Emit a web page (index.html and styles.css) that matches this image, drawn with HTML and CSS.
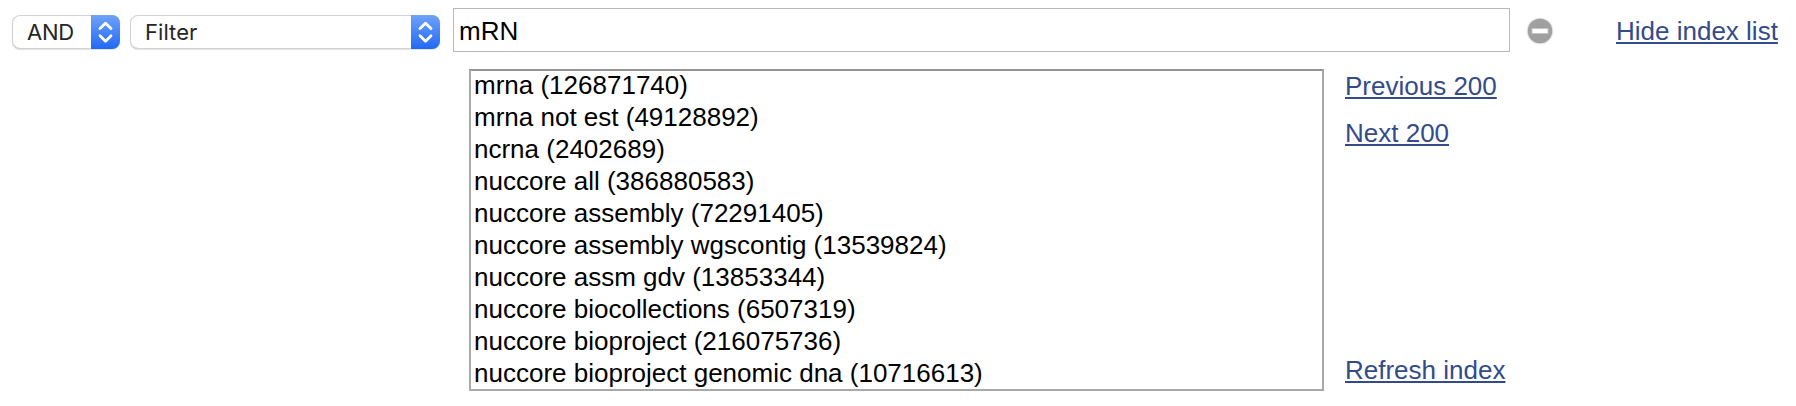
FILE: index.html
```html
<!DOCTYPE html>
<html lang="en">
<head>
<meta charset="utf-8">
<title>Search builder</title>
<link rel="stylesheet" href="styles.css">
</head>
<body>
<div class="row">
  <div class="select select-op"><span class="select-text op-text">AND</span><span class="stepper"><svg width="29" height="34" viewBox="0 0 29 34"><path d="M9 13.6l5.5-5.4 5.5 5.4M9 20.8l5.5 5.4 5.5-5.4"/></svg></span></div>
  <div class="select select-field"><span class="select-text">Filter</span><span class="stepper"><svg width="29" height="34" viewBox="0 0 29 34"><path d="M9 13.6l5.5-5.4 5.5 5.4M9 20.8l5.5 5.4 5.5-5.4"/></svg></span></div>
  <div class="term">mRN</div>
  <svg class="remove" width="28" height="28" viewBox="0 0 28 28"><circle class="halo" cx="14" cy="14" r="13.3"/><circle class="disc" cx="14" cy="14" r="12.2"/><rect class="dash" x="6" y="11.5" width="16" height="5"/></svg>
  <a class="link hide">Hide index list</a>
</div>
<div class="index">
  <ul class="list">
    <li>mrna (126871740)</li>
    <li>mrna not est (49128892)</li>
    <li>ncrna (2402689)</li>
    <li>nuccore all (386880583)</li>
    <li>nuccore assembly (72291405)</li>
    <li>nuccore assembly wgscontig (13539824)</li>
    <li>nuccore assm gdv (13853344)</li>
    <li>nuccore biocollections (6507319)</li>
    <li>nuccore bioproject (216075736)</li>
    <li>nuccore bioproject genomic dna (10716613)</li>
  </ul>
  <div class="links">
    <a class="link">Previous 200</a>
    <a class="link next">Next 200</a>
    <a class="link refresh">Refresh index</a>
  </div>
</div>
</body>
</html>
```

FILE: styles.css
```css
* { box-sizing: border-box; }
body {
  margin: 0;
  background: #fff;
  color: #000;
  font: 26px/32px "Liberation Sans", Arial, sans-serif;
}
.row {
  display: flex;
  align-items: flex-start;
  height: 69px;
  padding: 8px 0 0 12px;
}
.select {
  display: flex;
  justify-content: space-between;
  height: 34px;
  margin-top: 7px;
  border-radius: 8px;
  overflow: hidden;
  box-shadow: inset 0 0 0 1px #d2d2d2, inset 0 -1px 0 #bcbcbc, 0 1px 1px #e2e2e2;
}
.select-op { width: 108px; }
.select-field { width: 310px; margin-left: 10px; }
.select-text {
  padding-left: 15px;
  color: #262626;
  font: 22px/34px Inter, sans-serif;
  letter-spacing: 0.05px;
}
.op-text { letter-spacing: -0.2px; }
.stepper {
  width: 29px;
  height: 34px;
  background: linear-gradient(#6fa3f7, #2268f5);
}
.stepper svg { display: block; }
.stepper path {
  fill: none;
  stroke: #fff;
  stroke-width: 2.8;
  stroke-linecap: round;
  stroke-linejoin: round;
}
.term {
  width: 1057px;
  height: 44px;
  margin-left: 13px;
  padding: 6px 0 0 5px;
  border: 1px solid #b9b9b9;
  line-height: 32px;
}
.remove { margin: 9px 0 0 16px; }
.halo { fill: #e4e4e4; }
.disc { fill: #a0a0a0; }
.dash { fill: #fff; stroke: #c4c4c4; stroke-width: 1; }
.link {
  color: #334b8b;
  text-decoration: underline;
  text-decoration-thickness: 2px;
  text-underline-offset: 2px;
  white-space: nowrap;
}
.hide { margin: 7px 0 0 62px; }
.index { display: flex; padding-left: 469px; }
.list {
  width: 855px;
  height: 322px;
  margin: 0;
  padding: 0 0 0 3px;
  border: 2px solid #a9a9a9;
  border-top-color: #959595;
  list-style: none;
}
.list li:first-child { margin-top: -2px; }
.links {
  display: flex;
  flex-direction: column;
  align-items: flex-start;
  height: 322px;
  padding: 1px 0 5px 21px;
}
.next { margin-top: 15px; }
.refresh { margin-top: auto; }
```
